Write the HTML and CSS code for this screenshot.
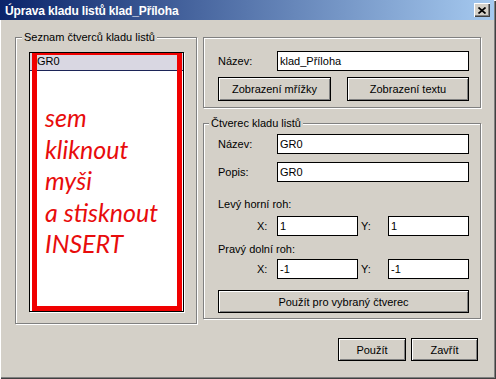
FILE: index.html
```html
<!DOCTYPE html>
<html lang="cs">
<head>
    <meta charset="UTF-8">
    <meta name="viewport" content="width=device-width, initial-scale=1.0">
    <title>Úprava kladu listů klad_Příloha</title>
    <link rel="stylesheet" href="styles.css">
</head>
<body>
    <div class="window">
        <div class="titlebar">
            <span class="title">Úprava kladu listů klad_Příloha</span>
            <span class="close-btn">
                <svg width="8" height="7" viewBox="0 0 8 7">
                    <path d="M0.5 0.5 L7.5 6.5 M7.5 0.5 L0.5 6.5" stroke="#000" stroke-width="1.7" fill="none"/>
                </svg>
            </span>
        </div>

        <div class="columns">
            <fieldset class="group list-group">
                <legend>Seznam čtverců kladu listů</legend>
                <div class="listbox">
                    <div class="list-item">GR0</div>
                    <!-- annotation drawn over the list -->
                    <div class="hint">sem<br>kliknout<br>myši<br>a stisknout<br>INSERT</div>
                </div>
            </fieldset>

            <div class="right-col">
                <div class="group plain-group">
                    <div class="field-row">
                        <span class="field-label">Název:</span>
                        <input class="text-input" type="text" value="klad_Příloha">
                    </div>
                    <div class="button-row">
                        <button class="btn grid-btn">Zobrazení mřížky</button>
                        <button class="btn text-btn">Zobrazení textu</button>
                    </div>
                </div>

                <fieldset class="group square-group">
                    <legend>Čtverec kladu listů</legend>
                    <div class="field-row">
                        <span class="field-label">Název:</span>
                        <input class="text-input" type="text" value="GR0">
                    </div>
                    <div class="field-row">
                        <span class="field-label">Popis:</span>
                        <input class="text-input" type="text" value="GR0">
                    </div>

                    <div class="corner-label">Levý horní roh:</div>
                    <div class="coord-row">
                        <span class="coord-x">X:</span>
                        <input class="text-input coord-input" type="text" value="1">
                        <span class="coord-y">Y:</span>
                        <input class="text-input coord-input" type="text" value="1">
                    </div>

                    <div class="corner-label second">Pravý dolní roh:</div>
                    <div class="coord-row tight">
                        <span class="coord-x">X:</span>
                        <input class="text-input coord-input" type="text" value="-1">
                        <span class="coord-y">Y:</span>
                        <input class="text-input coord-input" type="text" value="-1">
                    </div>

                    <button class="btn apply-btn">Použít pro vybraný čtverec</button>
                </fieldset>
            </div>
        </div>

        <div class="footer">
            <button class="btn use-btn">Použít</button>
            <button class="btn close-dlg-btn">Zavřít</button>
        </div>
    </div>
</body>
</html>
```

FILE: styles.css
```css
body {
    margin: 0;
    font-family: "Liberation Sans", Arial, sans-serif;
    font-size: 11px;
    color: #000;
    background: #d4d0c8;
}
.window {
    width: 496px;
    height: 379px;
    box-sizing: border-box;
    background: #d4d0c8;
    box-shadow: inset 1px 1px #fff, inset -1px -1px #404040, inset -2px -2px #808080;
    overflow: hidden;
}
.titlebar {
    height: 20px;
    margin-right: 2px;
    padding: 0 4px 0 5px;
    display: flex;
    align-items: center;
    justify-content: space-between;
    background: linear-gradient(to right, #0a246a, #a6caf0);
}
.title {
    color: #fff;
    font-weight: bold;
    font-size: 12px;
    letter-spacing: -0.15px;
    padding-top: 1px;
}
.close-btn {
    width: 16px;
    height: 14px;
    box-sizing: border-box;
    display: flex;
    align-items: center;
    justify-content: center;
    background: #d4d0c8;
    box-shadow: inset 1px 1px #fff, inset -1px -1px #404040, inset -2px -2px #808080;
}
.columns {
    display: flex;
    gap: 6px;
    padding: 11px 0 0 15px;
}
.group {
    margin: 0;
    min-width: 0;
    border: 1px solid #808080;
    box-shadow: inset 1px 1px #fff, 1px 1px #fff;
}
legend {
    padding: 0 2px;
    line-height: 13px;
    background: #d4d0c8;
}
.list-group {
    width: 182px;
    box-sizing: border-box;
    padding: 8px 0 11px 13px;
}
.list-group legend {
    margin-left: -7px;
}
.listbox {
    position: relative;
    width: 155px;
    height: 260px;
    box-sizing: border-box;
    border: 1px solid #000;
    background: #fff;
    box-shadow: 1px 1px #fff;
}
.list-item {
    height: 17px;
    line-height: 17px;
    padding-left: 7px;
    background: #d9d7e2;
    border-bottom: 1px solid #1c2458;
}
.hint {
    position: absolute;
    top: 0;
    left: 2px;
    bottom: 0;
    width: 150px;
    box-sizing: border-box;
    border: 5px solid #f00000;
    border-top-width: 2px;
    padding: 47px 0 0 8px;
    font-family: Lato, "Open Sans", sans-serif;
    font-style: italic;
    font-size: 25px;
    line-height: 31.5px;
    color: #e80c0c;
}
.right-col {
    width: 278px;
    display: flex;
    flex-direction: column;
}
.plain-group {
    margin-top: 6px;
    padding: 13px 11px 6px 14px;
}
.field-row {
    display: flex;
    align-items: center;
}
.field-row + .field-row {
    margin-top: 8px;
}
.field-label {
    width: 59px;
    flex: none;
}
.text-input {
    flex: 1;
    min-width: 0;
    height: 20px;
    box-sizing: border-box;
    margin: 0;
    padding: 0 2px;
    border: 1px solid #000;
    background: #fff;
    font: inherit;
    color: #000;
    outline: none;
}
.button-row {
    display: flex;
    justify-content: space-between;
    margin-top: 6px;
}
.btn {
    height: 24px;
    margin: 0;
    padding: 0;
    border: 1px solid #000;
    background: #d4d0c8;
    box-shadow: inset 1px 1px #fff, inset -1px -1px #808080;
    font: inherit;
    color: #000;
}
.grid-btn {
    width: 113px;
}
.text-btn {
    width: 122px;
}
.square-group {
    margin-top: 9px;
    padding: 4px 11px 5px 14px;
}
.square-group legend {
    margin-left: -9px;
}
.corner-label {
    margin-top: 16px;
    line-height: 13px;
}
.corner-label.second {
    margin-top: 7px;
}
.coord-row {
    display: flex;
    align-items: center;
    margin-top: 5px;
}
.coord-row.tight {
    margin-top: 3px;
}
.coord-x {
    width: 59px;
    box-sizing: border-box;
    padding-left: 39px;
    flex: none;
}
.coord-y {
    width: 30px;
    box-sizing: border-box;
    padding-left: 3px;
    flex: none;
}
.coord-input {
    flex: none;
    width: 81px;
}
.apply-btn {
    width: 100%;
    height: 23px;
    margin-top: 11px;
}
.footer {
    display: flex;
    justify-content: flex-end;
    gap: 5px;
    padding: 14px 18px 0 0;
}
.footer .btn {
    height: 23px;
}
.use-btn {
    width: 68px;
}
.close-dlg-btn {
    width: 67px;
}
```
